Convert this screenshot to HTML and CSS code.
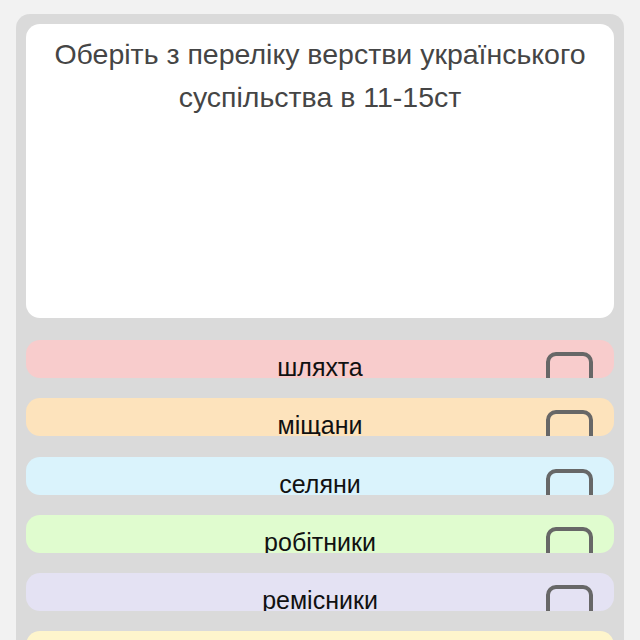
FILE: index.html
```html
<!DOCTYPE html>
<html lang="uk">
<head>
<meta charset="utf-8">
<link rel="stylesheet" href="styles.css">
</head>
<body>
<div class="quiz">
  <div class="question">Оберіть з переліку верстви українського суспільства в 11-15ст</div>
  <div class="options">
    <div class="option c1"><span class="spacer"></span><span class="label">шляхта</span><span class="box"></span></div>
    <div class="option c2"><span class="spacer"></span><span class="label">міщани</span><span class="box"></span></div>
    <div class="option c3"><span class="spacer"></span><span class="label">селяни</span><span class="box"></span></div>
    <div class="option c4"><span class="spacer"></span><span class="label">робітники</span><span class="box"></span></div>
    <div class="option c5"><span class="spacer"></span><span class="label">ремісники</span><span class="box"></span></div>
    <div class="option c6"><span class="spacer"></span><span class="label">духовенство</span><span class="box"></span></div>
  </div>
</div>
</body>
</html>
```
FILE: styles.css
```css
html, body {
  margin: 0;
  padding: 0;
  background: #f2f2f2;
  height: 640px;
  overflow: hidden;
}
body {
  font-family: "Liberation Sans", Arial, sans-serif;
}
.quiz {
  margin: 14px 16px 0;
  padding: 10px;
  background: #dadada;
  border-radius: 14px;
  min-height: 700px;
}
.question {
  background: #fff;
  border-radius: 14px;
  height: 294px;
  box-sizing: border-box;
  padding: 9px 12px 0;
  text-align: center;
  color: #454545;
  font-size: 28.5px;
  line-height: 43px;
}
.options {
  margin-top: 22px;
  display: flex;
  flex-direction: column;
  gap: 20.25px;
}
.option {
  height: 38px;
  border-radius: 14px;
  overflow: hidden;
  display: grid;
  grid-template-columns: 47px 1fr 47px;
  align-items: start;
  padding: 12px 21px 0;
  box-sizing: border-box;
}
.label {
  text-align: center;
  font-size: 25px;
  line-height: 26px;
  margin-top: 2px;
  color: #111;
  white-space: nowrap;
}
.box {
  width: 47px;
  height: 44px;
  box-sizing: border-box;
  border: 4px solid #676767;
  border-radius: 10px;
}
.c1 { background: #f8cccc; }
.c2 { background: #fde3bc; }
.c3 { background: #daf3fc; }
.c4 { background: #e0fccf; }
.c5 { background: #e4e2f3; }
.c6 { background: #fef5cc; }
```
